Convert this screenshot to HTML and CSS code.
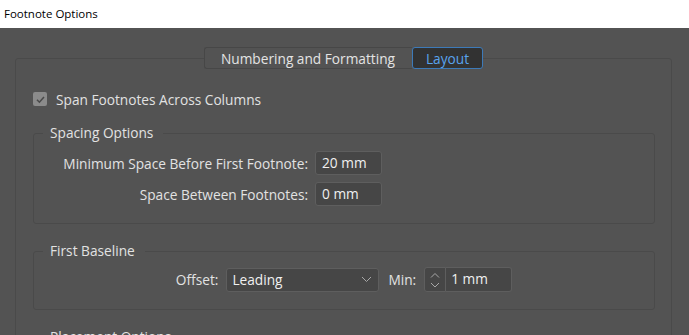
FILE: index.html
```html
<!DOCTYPE html>
<html>
<head>
<meta charset="utf-8">
<title>Footnote Options</title>
<link rel="stylesheet" href="styles.css">
</head>
<body>
<div class="titlebar">Footnote Options</div>
<div class="dialog">
  <div class="tabs">
    <div class="tab">Numbering and Formatting</div>
    <div class="tab active">Layout</div>
  </div>
  <div class="panel">
    <div class="check">
      <span class="box"><svg width="11" height="11" viewBox="0 0 11 11"><path d="M2 5.8 L4.4 8.2 L9 3" fill="none" stroke="#4a4a4a" stroke-width="1.6"/></svg></span>
      <span>Span Footnotes Across Columns</span>
    </div>
    <fieldset class="group spacing">
      <legend>Spacing Options</legend>
      <div class="grid">
        <span class="lbl">Minimum Space Before First Footnote:</span>
        <div class="field">20 mm</div>
        <span class="lbl">Space Between Footnotes:</span>
        <div class="field">0 mm</div>
      </div>
    </fieldset>
    <fieldset class="group baseline">
      <legend>First Baseline</legend>
      <div class="row">
        <span class="lbl">Offset:</span>
        <div class="select"><span>Leading</span><svg width="11" height="7" viewBox="0 0 11 7"><path d="M1 1 L5.5 5.5 L10 1" fill="none" stroke="#a8a8a8" stroke-width="1"/></svg></div>
        <span class="lbl min">Min:</span>
        <div class="spin"><svg width="12" height="22" viewBox="0 0 12 22"><path d="M2 8.5 L6 4.5 L10 8.5" fill="none" stroke="#a8a8a8" stroke-width="1"/><path d="M2 14 L6 18 L10 14" fill="none" stroke="#a8a8a8" stroke-width="1"/></svg></div>
        <div class="field narrow">1 mm</div>
      </div>
    </fieldset>
    <fieldset class="group placement">
      <legend>Placement Options</legend>
      <div class="filler"></div>
    </fieldset>
  </div>
</div>
</body>
</html>
```

FILE: styles.css
```css
* { box-sizing: border-box; }
html, body { margin: 0; padding: 0; }
body {
  background: #535353;
  font-family: "Open Sans", "Noto Sans", sans-serif;
  font-size: 13.7px;
  color: #e2e2e2;
  width: 689px;
  height: 335px;
  overflow: hidden;
}
.titlebar {
  height: 28px;
  background: #ffffff;
  color: #000;
  font-size: 11.5px;
  line-height: 28px;
  padding-left: 4px;
}
.dialog {
  padding: 19px 17px 0 15px;
}
.tabs {
  display: flex;
  justify-content: center;
  position: relative;
  z-index: 1;
  margin-bottom: -11px;
}
.tabs .tab {
  flex: none;
  height: 22px;
  line-height: 21px;
  background: #535353;
  border: 1px solid #474747;
  color: #e4e4e4;
}
.tabs .tab:first-child {
  width: 208px;
  padding-left: 16px;
  border-radius: 3px 0 0 3px;
  border-right: none;
}
.tabs .tab.active {
  width: 71px;
  text-align: center;
  background: #323232;
  border: 1px solid #3d7ab8;
  border-radius: 3px;
  color: #59a3ee;
}
.panel {
  border: 1px solid #4a4a4a;
  border-radius: 3px;
  height: 300px;
  padding: 31px 16px 0 17px;
}
.check {
  display: flex;
  align-items: center;
  height: 18px;
  line-height: 19px;
}
.check .box {
  flex: none;
  width: 14px;
  height: 14px;
  background: #8b8b8b;
  border-radius: 2px;
  display: flex;
  align-items: center;
  justify-content: center;
  margin-right: 9px;
}
.group {
  margin: 17px 0 0 0;
  border: 1px solid #4a4a4a;
  border-radius: 3px;
  padding: 10px 0 17px 0;
  min-width: 0;
}
.group legend {
  margin-left: 9px;
  padding: 0 10px 0 7px;
  line-height: 16px;
  color: #e2e2e2;
}
.baseline, .placement { margin-top: 19px; }
.baseline { padding-top: 8px; }
.grid {
  display: grid;
  grid-template-columns: 274px 67px;
  column-gap: 7px;
  row-gap: 7px;
  align-items: center;
}
.lbl { text-align: right; white-space: nowrap; }
.field {
  height: 24px;
  line-height: 22px;
  background: #464646;
  border: 1px solid #5e5e5e;
  border-radius: 3px;
  padding-left: 6px;
  color: #f0f0f0;
}
.row {
  display: flex;
  justify-content: center;
  align-items: center;
}
.row > * { flex: none; }
.row .lbl { margin-right: 8px; }
.row .min { margin-left: 9px; }
.select {
  width: 153px;
  height: 24px;
  background: #464646;
  border: 1px solid #5e5e5e;
  border-radius: 3px;
  display: flex;
  align-items: center;
  justify-content: space-between;
  padding: 0 6px 0 5px;
  color: #f0f0f0;
}
.spin {
  width: 22px;
  height: 25px;
  background: #464646;
  border: 1px solid #5e5e5e;
  border-radius: 3px 0 0 3px;
  display: flex;
  align-items: center;
  justify-content: center;
}
.field.narrow {
  width: 66px;
  height: 25px;
  border-left: none;
  border-radius: 0 3px 3px 0;
  padding-left: 5px;
}
.filler { height: 40px; }
```
